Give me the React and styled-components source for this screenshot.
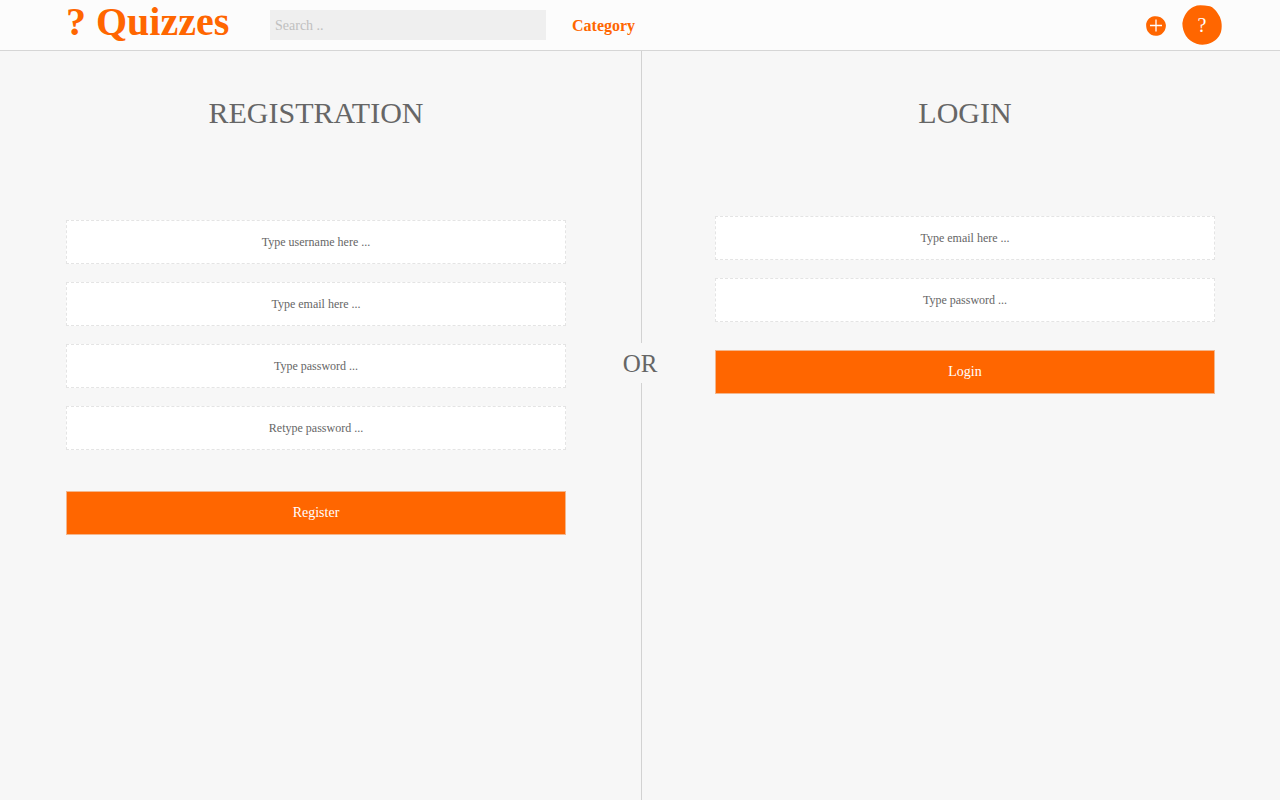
import React from "react";
import styled, { createGlobalStyle } from "styled-components";

const orange = "#ff6600";
const grey = "#666666";
const serif = '"Liberation Serif", "Times New Roman", serif';

const GlobalStyle = createGlobalStyle`
  *, *::before, *::after { box-sizing: border-box; }
  body { margin: 0; background: #f7f7f7; color: ${grey}; font-family: ${serif}; }
  input, button { font-family: inherit; }
`;

const Header = styled.header`
  display: flex;
  align-items: center;
  height: 51px;
  padding: 0 58px 0 66px;
  background: #fcfcfc;
  border-bottom: 1px solid #d6d6d6;
`;

const Logo = styled.a`
  width: 204px;
  padding-bottom: 6px;
  color: ${orange};
  font-size: 40px;
  font-weight: bold;
  line-height: 44px;
  text-decoration: none;
  white-space: nowrap;
`;

const Search = styled.input`
  width: 276px;
  height: 30px;
  padding: 2px 5px 0;
  border: 0;
  background: #efefef;
  color: ${grey};
  font-size: 14px;
  &::placeholder { color: #c0c0c0; opacity: 1; }
`;

const NavLink = styled.a`
  margin-left: 26px;
  padding-top: 2px;
  color: ${orange};
  font-size: 16px;
  font-weight: bold;
  text-decoration: none;
`;

const Actions = styled.div`
  display: flex;
  align-items: center;
  gap: 16px;
  margin-left: auto;
`;

const RoundButton = styled.button`
  display: grid;
  place-items: center;
  padding: 0;
  border: 0;
  background: none;
  color: #fff;
  font-size: 20px;
  line-height: 24px;
  cursor: pointer;
  & > * { grid-area: 1 / 1; }
  & > span { z-index: 1; }
`;

const Main = styled.main`
  display: grid;
  grid-template-columns: 1fr 40px 1fr;
  min-height: calc(100vh - 51px);
`;

const Panel = styled.section`
  display: flex;
  flex-direction: column;
  padding: ${(p) => (p.$side === "left" ? "44px 54px 40px 66px" : "44px 65px 40px 55px")};
`;

const Title = styled.h1`
  margin: 0;
  font-size: 30px;
  font-weight: normal;
  line-height: 36px;
  text-align: center;
`;

const Form = styled.form`
  display: flex;
  flex-direction: column;
  gap: 18px;
  margin-top: ${(p) => p.$top}px;
`;

const Field = styled.input`
  width: 100%;
  height: 44px;
  padding: 0 10px;
  border: 1px dashed #e4e4e4;
  background: #fff;
  color: ${grey};
  font-size: 12px;
  text-align: center;
  &::placeholder { color: ${grey}; opacity: 1; }
`;

const Submit = styled.button`
  width: 100%;
  height: 44px;
  margin-top: ${(p) => p.$top}px;
  padding: 0;
  border: 1px solid #f3b68c;
  background: ${orange};
  color: #fff;
  font-size: 14px;
  cursor: pointer;
`;

const Divider = styled.div`
  display: flex;
  flex-direction: column;
  align-items: center;
`;

const Line = styled.div`
  flex: ${(p) => (p.$fill ? "1" : "0 0 292px")};
  width: 1px;
  margin-left: 3px;
  background: #d2d2d2;
`;

const Or = styled.span`
  padding-top: 2px;
  font-size: 25px;
  line-height: 38px;
`;

export default function App() {
  return (
    <>
      <GlobalStyle />
      <Header>
        <Logo href="#">? Quizzes</Logo>
        <Search type="search" placeholder="Search .." aria-label="Search" />
        <NavLink href="#category">Category</NavLink>
        <Actions>
          <RoundButton type="button" aria-label="Add quiz">
            <svg width="20" height="22" viewBox="0 0 20 22" aria-hidden="true">
              <path d="M5 3.200C7 2 11 1.800 14.500 3.200C17.500 5 19.500 7.500 19.900 11C20 16 17 20.500 12.500 21.500C8 22.500 4 21 1.800 17.500C.2 15 0 12 .2 9.500C1 6.500 2.500 4.500 5 3.200Z" fill={orange} />
              <path d="M10 5.500V17.500M4 11.500H16" stroke="#fff" strokeWidth="1.300" />
            </svg>
          </RoundButton>
          <RoundButton type="button" aria-label="Profile">
            <svg width="40" height="40" viewBox="0 0 40 40" aria-hidden="true">
              <path d="M15 .4Q20 -.2 28 1.200C31 2.200 33.500 5 35.500 8Q38.500 12 39.200 16Q40.300 22 39 27C37 33 33 36 28.500 38C24 40 19 40.200 14.500 38.800C9.500 37 6.500 34.500 4 31C1.500 27 .2 22 .4 18Q.8 14 2.800 10.500C5.500 5.500 9.500 1.800 15 .4Z" fill={orange} />
            </svg>
            <span>?</span>
          </RoundButton>
        </Actions>
      </Header>
      <Main>
        <Panel $side="left">
          <Title>REGISTRATION</Title>
          <Form $top={89}>
            <Field type="text" placeholder="Type username here ..." aria-label="Username" />
            <Field type="email" placeholder="Type email here ..." aria-label="Email" />
            <Field type="password" placeholder="Type password ..." aria-label="Password" />
            <Field type="password" placeholder="Retype password ..." aria-label="Retype password" />
            <Submit type="button" $top={23}>Register</Submit>
          </Form>
        </Panel>
        <Divider>
          <Line />
          <Or>OR</Or>
          <Line $fill />
        </Divider>
        <Panel $side="right">
          <Title>LOGIN</Title>
          <Form $top={85}>
            <Field type="email" placeholder="Type email here ..." aria-label="Login email" />
            <Field type="password" placeholder="Type password ..." aria-label="Login password" />
            <Submit type="button" $top={10}>Login</Submit>
          </Form>
        </Panel>
      </Main>
    </>
  );
}
